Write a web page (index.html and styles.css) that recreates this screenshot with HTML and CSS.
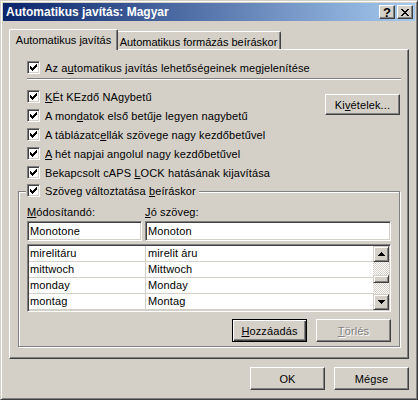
FILE: index.html
```html
<!DOCTYPE html>
<html>
<head>
<meta charset="utf-8">
<link rel="stylesheet" href="styles.css">
</head>
<body>
<div class="window">
  <div class="titlebar">
    <span class="title">Automatikus javítás: Magyar</span>
    <div class="tbtns">
      <span class="tbtn help">?</span>
      <span class="tbtn close"><svg width="8" height="7" viewBox="0 0 8 7"><path d="M0 0h2v1H0zM6 0h2v1H6zM1 1h2v1H1zM5 1h2v1H5zM2 2h4v1H2zM3 3h2v1H3zM2 4h4v1H2zM1 5h2v1H1zM5 5h2v1H5zM0 6h2v1H0zM6 6h2v1H6z"/></svg></span>
    </div>
  </div>
  <div class="tabs">
    <div class="tab active t1">Automatikus javítás</div>
    <div class="tab t2">Automatikus formázás beíráskor</div>
  </div>
  <div class="panel">
    <div class="chk top"><span class="box"><svg width="7" height="7" viewBox="0 0 7 7"><path d="M0 2h1v3H0zM1 3h1v3H1zM2 4h1v3H2zM3 3h1v3H3zM4 2h1v3H4zM5 1h1v3H5zM6 0h1v3H6z"/></svg></span><span>Az a<u>u</u>tomatikus javítás lehetőségeinek megjelenítése</span></div>
    <div class="sep"></div>
    <div class="opts">
      <div class="optlist">
        <div class="chk"><span class="box"><svg width="7" height="7" viewBox="0 0 7 7"><path d="M0 2h1v3H0zM1 3h1v3H1zM2 4h1v3H2zM3 3h1v3H3zM4 2h1v3H4zM5 1h1v3H5zM6 0h1v3H6z"/></svg></span><span><u>K</u>Ét KEzdő NAgybetű</span></div>
        <div class="chk"><span class="box"><svg width="7" height="7" viewBox="0 0 7 7"><path d="M0 2h1v3H0zM1 3h1v3H1zM2 4h1v3H2zM3 3h1v3H3zM4 2h1v3H4zM5 1h1v3H5zM6 0h1v3H6z"/></svg></span><span>A mon<u>d</u>atok első betűje legyen nagybetű</span></div>
        <div class="chk"><span class="box"><svg width="7" height="7" viewBox="0 0 7 7"><path d="M0 2h1v3H0zM1 3h1v3H1zM2 4h1v3H2zM3 3h1v3H3zM4 2h1v3H4zM5 1h1v3H5zM6 0h1v3H6z"/></svg></span><span>A táblázatc<u>e</u>llák szövege nagy kezdőbetűvel</span></div>
        <div class="chk"><span class="box"><svg width="7" height="7" viewBox="0 0 7 7"><path d="M0 2h1v3H0zM1 3h1v3H1zM2 4h1v3H2zM3 3h1v3H3zM4 2h1v3H4zM5 1h1v3H5zM6 0h1v3H6z"/></svg></span><span><u>A</u> hét napjai angolul nagy kezdőbetűvel</span></div>
        <div class="chk"><span class="box"><svg width="7" height="7" viewBox="0 0 7 7"><path d="M0 2h1v3H0zM1 3h1v3H1zM2 4h1v3H2zM3 3h1v3H3zM4 2h1v3H4zM5 1h1v3H5zM6 0h1v3H6z"/></svg></span><span>Bekapcsolt cAPS <u>L</u>OCK hatásának kijavítása</span></div>
      </div>
      <div class="btn exc">Ki<u>v</u>ételek...</div>
    </div>
    <div class="group">
      <div class="chk ghead"><span class="box"><svg width="7" height="7" viewBox="0 0 7 7"><path d="M0 2h1v3H0zM1 3h1v3H1zM2 4h1v3H2zM3 3h1v3H3zM4 2h1v3H4zM5 1h1v3H5zM6 0h1v3H6z"/></svg></span><span>Szöveg változtatása <u>b</u>eíráskor</span></div>
      <div class="fields">
        <span class="lbl"><u>M</u>ódosítandó:</span>
        <span class="lbl"><u>J</u>ó szöveg:</span>
        <div class="input">Monotone</div>
        <div class="input">Monoton</div>
      </div>
      <div class="list">
        <div class="rows">
          <div class="row"><span class="c1">mirelitáru</span><span class="c2">mirelit áru</span></div>
          <div class="row"><span class="c1">mittwoch</span><span class="c2">Mittwoch</span></div>
          <div class="row"><span class="c1">monday</span><span class="c2">Monday</span></div>
          <div class="row"><span class="c1">montag</span><span class="c2">Montag</span></div>
        </div>
        <div class="vscroll">
          <div class="sb"><svg width="7" height="4" viewBox="0 0 7 4"><path d="M3 0h1v1H3zM2 1h3v1H2zM1 2h5v1H1zM0 3h7v1H0z"/></svg></div>
          <div class="thumb"></div>
          <div class="track"></div>
          <div class="sb"><svg width="7" height="4" viewBox="0 0 7 4"><path d="M0 0h7v1H0zM1 1h5v1H1zM2 2h3v1H2zM3 3h1v1H3z"/></svg></div>
        </div>
      </div>
      <div class="gbtns">
        <div class="btn default"><u>H</u>ozzáadás</div>
        <div class="btn disabled"><u>T</u>örlés</div>
      </div>
    </div>
  </div>
  <div class="footer">
    <div class="btn">OK</div>
    <div class="btn">Mégse</div>
  </div>
</div>
</body>
</html>
```

FILE: styles.css
```css
* { box-sizing: border-box; }
body {
  margin: 0;
  background: #d4d0c8;
  font: 11px "Liberation Sans", Arial, sans-serif;
  letter-spacing: 0.12px;
  color: #000;
}
.window {
  width: 418px;
  height: 400px;
  background: #d4d0c8;
  border: 1px solid;
  border-color: #d4d0c8 #404040 #404040 #d4d0c8;
  box-shadow: inset 1px 1px #fff, inset -1px -1px #808080;
  padding: 2px;
  display: flex;
  flex-direction: column;
}
.titlebar {
  height: 18px;
  flex: none;
  background: linear-gradient(to right, #0a246a, #a6caf0);
  display: flex;
  align-items: center;
  padding: 0 2px 0 3px;
  color: #fff;
  font-weight: bold;
  font-size: 12px;
  letter-spacing: 0;
}
.title { flex: 1; white-space: nowrap; }
.tbtns { display: flex; gap: 2px; }
.tbtn {
  width: 16px;
  height: 14px;
  background: #d4d0c8;
  border: 1px solid;
  border-color: #fff #404040 #404040 #fff;
  box-shadow: inset -1px -1px #808080;
  display: flex;
  align-items: center;
  justify-content: center;
  color: #000;
}
.help { font-size: 13px; line-height: 12px; font-weight: bold; padding-top: 1px; }
.close svg { margin-top: 1px; }

.tabs {
  display: flex;
  align-items: flex-end;
  height: 20px;
  flex: none;
  margin: 8px 6px 0;
  padding-left: 2px;
}
.tab {
  height: 18px;
  padding-top: 4px;
  line-height: 12px;
  letter-spacing: 0;
  border: 1px solid;
  border-bottom: none;
  border-color: #fff #404040 #404040 #fff;
  box-shadow: inset -1px 0 #808080;
  border-radius: 2px 2px 0 0;
  text-align: center;
  white-space: nowrap;
  background: #d4d0c8;
}
.t1 { width: 105px; }
.t2 { width: 165px; }
.tab.active {
  width: 109px;
  height: 21px;
  margin: 0 -2px -1px;
  position: relative;
  z-index: 1;
}

.panel {
  height: 310px;
  flex: none;
  margin: 0 6px;
  border: 1px solid;
  border-color: #fff #404040 #404040 #fff;
  box-shadow: inset -1px -1px #808080;
  padding: 0 7px 0 8px;
}
.chk {
  display: flex;
  align-items: center;
  gap: 5px;
  height: 19px;
  white-space: nowrap;
}
.chk.top { margin: 9px 0 0 9px; height: 17px; }
.box {
  width: 13px;
  height: 13px;
  flex: none;
  background: #fff;
  border: 1px solid;
  border-color: #808080 #fff #fff #808080;
  box-shadow: inset 1px 1px #404040, inset -1px -1px #d4d0c8;
  display: flex;
  align-items: center;
  justify-content: center;
}
.box svg { display: block; }
.sep {
  margin: 2px 0 0 9px;
  width: 374px;
  border-top: 1px solid #808080;
  border-bottom: 1px solid #fff;
}
.opts {
  display: flex;
  justify-content: space-between;
  align-items: flex-start;
  margin: 7px 0 0 9px;
  width: 373px;
}
.btn {
  width: 75px;
  height: 23px;
  flex: none;
  background: #d4d0c8;
  border: 1px solid;
  border-color: #fff #404040 #404040 #fff;
  box-shadow: inset -1px -1px #808080;
  display: flex;
  align-items: center;
  justify-content: center;
  white-space: nowrap;
}
.btn.exc { height: 21px; margin-top: 7px; }
.btn.default {
  border: 1px solid #000;
  box-shadow: inset 1px 1px #fff, inset -1px -1px #404040, inset -2px -2px #808080;
}
.btn.disabled { color: #808080; text-shadow: 1px 1px #fff; }

.group {
  margin-top: 9px;
  width: 382px;
  border: 1px solid #808080;
  box-shadow: inset 1px 1px #fff, 1px 1px #fff;
  padding: 0 8px 4px 8px;
}
.ghead {
  width: fit-content;
  margin: -11px 0 0 -1px;
  padding: 0 3px 0 1px;
  background: #d4d0c8;
}
.fields {
  display: grid;
  grid-template-columns: 115px 246px;
  column-gap: 3px;
  margin-top: 5px;
}
.lbl { height: 14px; line-height: 14px; margin-bottom: 2px; }
.input {
  height: 20px;
  background: #fff;
  border: 1px solid;
  border-color: #808080 #fff #fff #808080;
  box-shadow: inset 1px 1px #404040, inset -1px -1px #d4d0c8;
  padding-left: 2px;
  line-height: 18px;
}
.list {
  margin-top: 3px;
  height: 68px;
  background: #fff;
  border: 1px solid;
  border-color: #808080 #fff #fff #808080;
  box-shadow: inset 1px 1px #404040, inset -1px -1px #d4d0c8;
  padding: 1px;
  display: flex;
}
.rows { flex: 1; }
.row {
  display: flex;
  height: 16px;
  line-height: 15px;
  border-bottom: 1px solid #d4d0c8;
}
.c1 { width: 117px; border-right: 1px solid #d4d0c8; padding-left: 1px; }
.c2 { padding-left: 2px; }
.vscroll {
  width: 16px;
  display: flex;
  flex-direction: column;
  background: repeating-conic-gradient(#d4d0c8 0 25%, #fff 0 50%) 0 0 / 2px 2px;
}
.sb, .thumb {
  background: #d4d0c8;
  border: 1px solid;
  border-color: #d4d0c8 #404040 #404040 #d4d0c8;
  box-shadow: inset 1px 1px #fff, inset -1px -1px #808080;
}
.sb {
  height: 16px;
  display: flex;
  align-items: center;
  justify-content: center;
}
.sb svg { display: block; }
.thumb { height: 8px; margin-top: 13px; }
.track { flex: 1; }
.gbtns {
  display: flex;
  justify-content: flex-end;
  gap: 9px;
  margin-top: 7px;
}
.footer {
  display: flex;
  justify-content: flex-end;
  gap: 9px;
  margin: 8px 6px 0;
}
```
